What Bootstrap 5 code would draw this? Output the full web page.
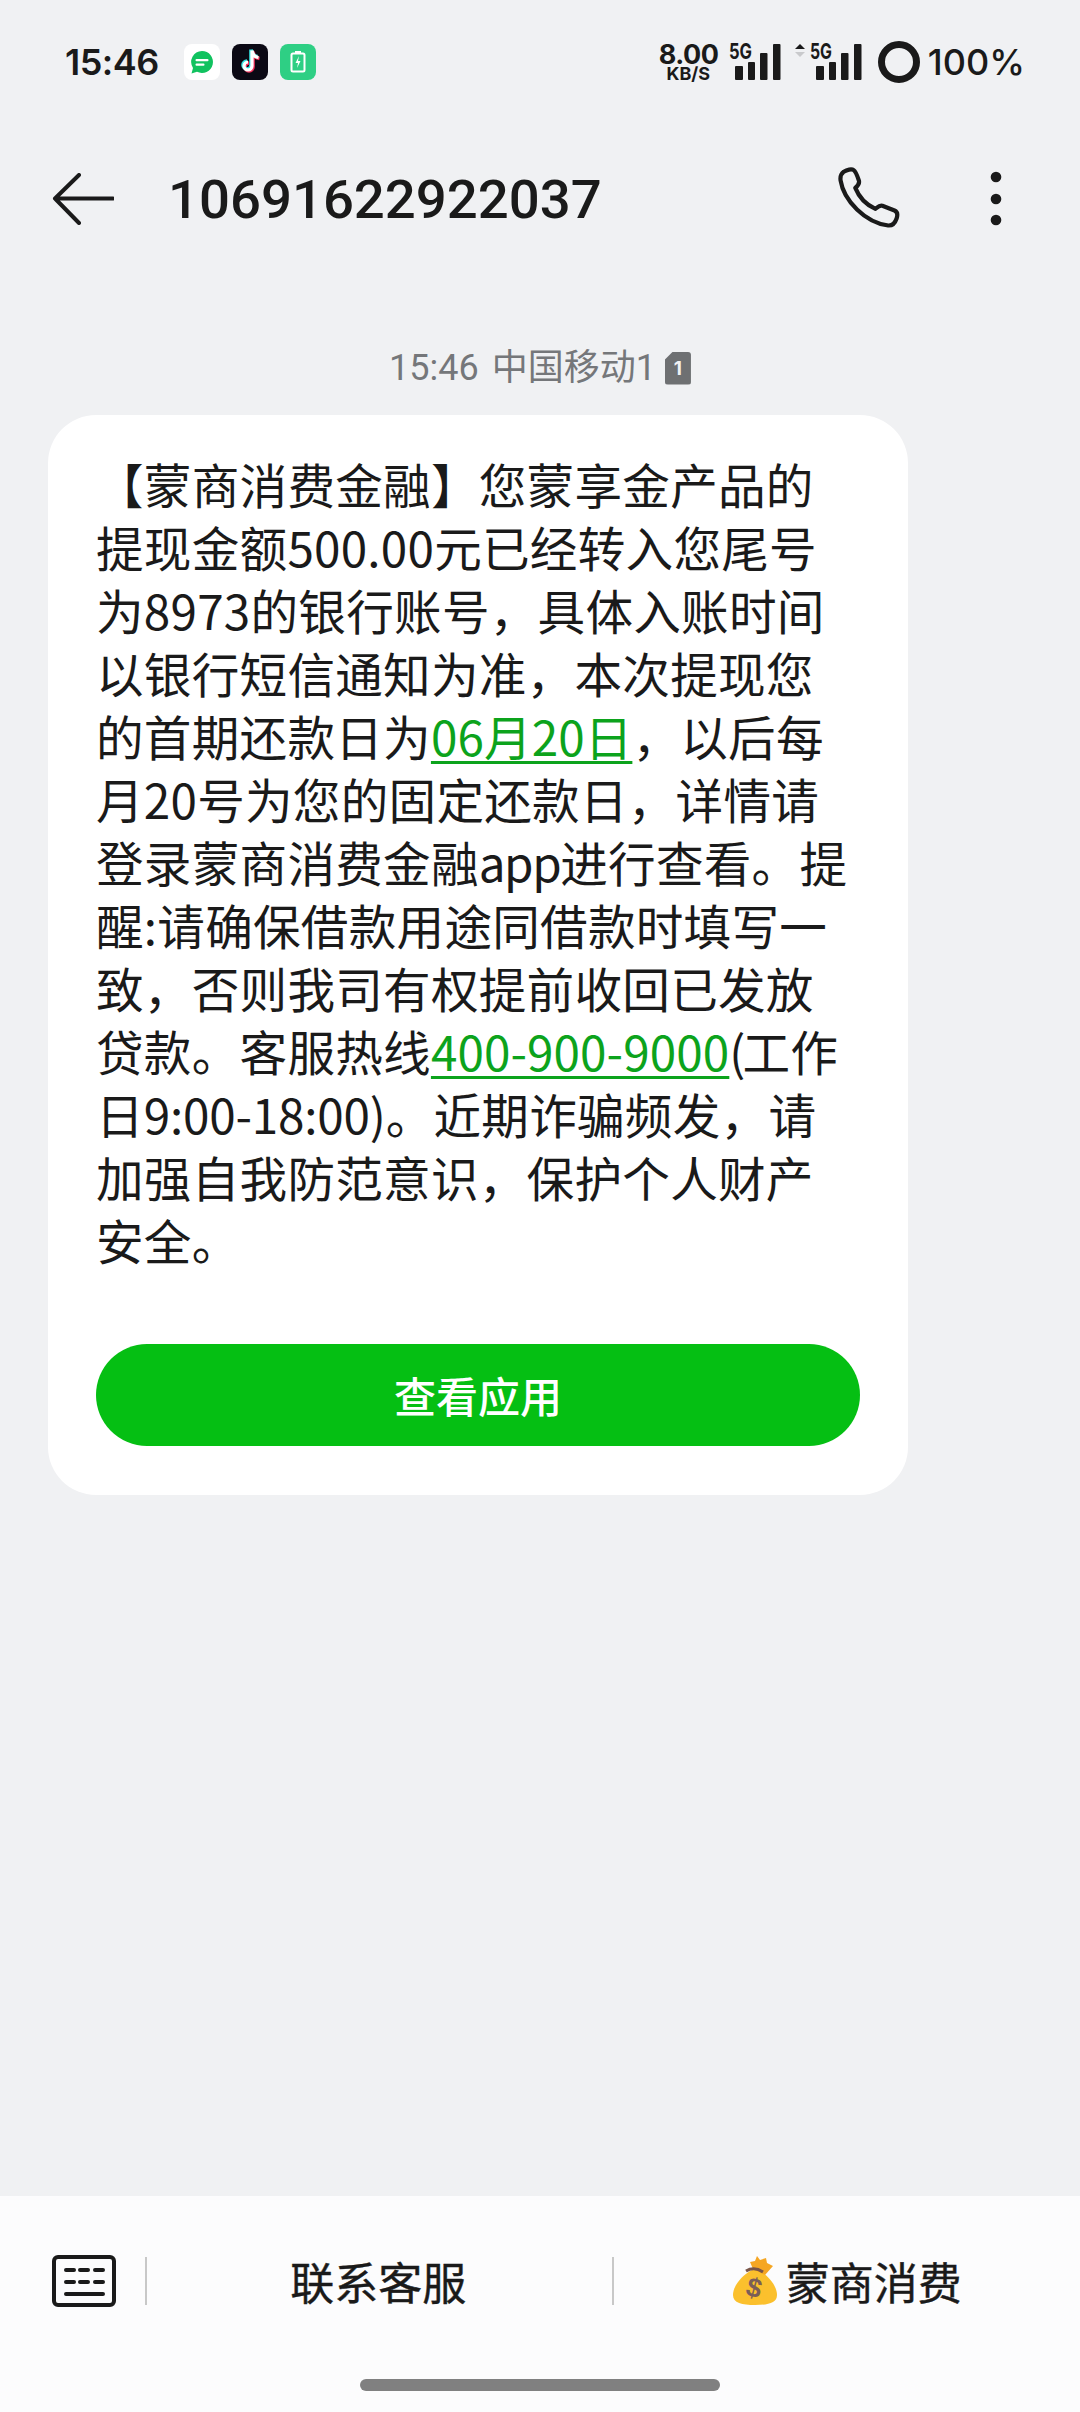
<!DOCTYPE html>
<html lang="zh-CN">
<head>
<meta charset="utf-8">
<title>短信</title>
<link href="https://cdn.jsdelivr.net/npm/bootstrap@5.3.0/dist/css/bootstrap.min.css" rel="stylesheet">
<style>
html,body{height:100%;}
body{background:#f0f1f3;color:#1a1a1a;font-family:Roboto,"Noto Sans CJK SC",sans-serif;width:1080px;height:2412px;overflow:hidden;}
.app-shell{height:2412px;}
.status-row{height:124px;padding:0 55px 0 65px;}
.status-time{font-family:Inter,Roboto,sans-serif;font-size:36px;font-weight:600;letter-spacing:-.5px;line-height:1;width:119px;}
.status-apps{gap:12px;}
.net-speed{font-family:Inter,sans-serif;font-weight:700;line-height:1;text-align:center;width:59px;margin-right:11px;}
.net-top{font-size:27px;letter-spacing:-.5px;height:23px;line-height:21px;}
.net-bot{font-size:18px;height:14px;line-height:14px;}
.sig-a{margin-right:13px;}
.sig-b{margin-right:16px;}
.batt-pct{font-family:Inter,sans-serif;font-size:36px;font-weight:500;line-height:1;margin-left:8px;}
.title-row{height:150px;padding:0 0 0 50px;}
.title-num{font-size:54.5px;font-weight:500;line-height:1;margin-left:54px;}
.title-actions{margin-left:auto;margin-right:78px;gap:87px;}
.stamp{margin-top:77px;height:34px;font-size:36px;line-height:34px;color:#75777a;gap:13px;}
.sim-tag{width:26px;height:33px;margin-left:-4px;background:#6e7072;color:#f0f1f3;font:700 19px/33px Inter,sans-serif;text-align:center;border-radius:3px;clip-path:polygon(8px 0,100% 0,100% 100%,0 100%,0 8px);}
.bubble{margin:30px 0 0 48px;width:860px;height:1080px;border-radius:48px;background:#fff;padding:37px 48px 0 48px;}
.msg-body{font-family:"Noto Sans CJK SC",sans-serif;font-size:47.6px;letter-spacing:.25px;line-height:63px;color:#1a1a1a;margin:0;white-space:nowrap;}
.msg-body a{color:#0ca31c;text-decoration:underline;text-underline-offset:5px;text-decoration-thickness:3px;letter-spacing:.1px;}
.run-app{letter-spacing:-1.45px;}
.run-paren{letter-spacing:-3px;}
.run-hours{letter-spacing:-.2px;}
.open-btn{display:block;width:100%;height:102px;margin-top:73px;border-radius:51px;border:0;background:#05bf13;color:#fff;font-family:"Noto Sans CJK SC",sans-serif;font-size:42px;font-weight:500;line-height:102px;padding:0;}
.spacer-area{flex:1 1 auto;}
.bottom-bar{height:216px;background:#fcfcfd;}
.menu-row{height:170px;}
.kbd-cell{width:145px;padding-left:52px;}
.menu-div{width:2px;height:48px;background:#c8c8c8;}
.menu-item{font-family:"Noto Sans CJK SC",sans-serif;font-size:44px;font-weight:400;-webkit-text-stroke:.4px #1a1a1a;line-height:1;color:#1a1a1a;width:466px;}
.menu-left{padding-right:3px;}
.bag-icon{margin-right:9px;}
.home-wrap{padding-top:13px;}
.home-bar{width:360px;height:12px;background:#808080;border-radius:6px;margin:0 auto;}
</style>
</head>
<body>
<div class="app-shell d-flex flex-column">
  <div class="status-row d-flex align-items-center">
    <div class="status-time">15:46</div>
    <div class="status-apps d-flex align-items-center">
      <svg width="36" height="36" viewBox="0 0 36 36"><rect width="36" height="36" rx="8" fill="#fff"/><path d="M18 7a11 11 0 1 1-5 20.800L7.500 29.500l1.500-5.500A11 11 0 0 1 18 7z" fill="#10c25f"/><rect x="11.500" y="15" width="13" height="2.200" rx="1" fill="#fff"/><rect x="11.500" y="19.500" width="9" height="2.200" rx="1" fill="#fff"/></svg>
      <svg width="36" height="36" viewBox="0 0 36 36"><rect width="36" height="36" rx="8" fill="#0b0914"/><path d="M19.500 6.500v15.500a4 4 0 1 1-4-4M19.500 6.500c.5 4 3 6.500 6.500 7" fill="none" stroke="#f4305a" stroke-width="3.600" transform="translate(1.500 1)"/><path d="M19.500 6.500v15.500a4 4 0 1 1-4-4M19.500 6.500c.5 4 3 6.500 6.500 7" fill="none" stroke="#35e4e4" stroke-width="3.600" transform="translate(-.5 -1)"/><path d="M19.500 6.500v15.500a4 4 0 1 1-4-4M19.500 6.500c.5 4 3 6.500 6.500 7" fill="none" stroke="#fff" stroke-width="3.200" transform="translate(.5 0)"/></svg>
      <svg width="36" height="36" viewBox="0 0 36 36"><rect width="36" height="36" rx="8" fill="#2ecf84"/><rect x="11.500" y="9.500" width="13" height="18" rx="1.500" fill="none" stroke="#fff" stroke-width="2"/><rect x="15" y="7" width="6" height="2.500" fill="#fff"/><path d="M19 12l-3.500 7H18l-1 5 3.500-7H18z" fill="#fff"/></svg>
    </div>
    <div class="d-flex align-items-center ms-auto">
      <div class="net-speed"><div class="net-top">8.00</div><div class="net-bot">KB/S</div></div>
      <svg class="sig-a" width="53" height="50" viewBox="0 -6 53 50"><text x="0" y="16" font-family="Inter,sans-serif" font-size="22" font-weight="700" fill="#1a1a1a" textLength="23" lengthAdjust="spacingAndGlyphs">5G</text><rect x="6" y="23" width="8" height="14" rx="1" fill="#1a1a1a"/><rect x="19" y="19" width="7" height="18" rx="1" fill="#1a1a1a"/><rect x="31" y="10" width="7.500" height="27" rx="1" fill="#1a1a1a"/><rect x="44" y="1" width="7.500" height="36" rx="1" fill="#1a1a1a"/></svg>
      <svg class="sig-b" width="67" height="50" viewBox="0 -6 67 50"><path d="M0 6l5-5 5 5z" fill="#1a1a1a"/><path d="M0 9l5 5 5-5z" fill="#c9cacc"/><text x="15" y="16" font-family="Inter,sans-serif" font-size="22" font-weight="700" fill="#1a1a1a" textLength="22" lengthAdjust="spacingAndGlyphs">5G</text><rect x="21" y="23" width="8" height="14" rx="1" fill="#1a1a1a"/><rect x="34" y="19" width="7" height="18" rx="1" fill="#1a1a1a"/><rect x="46" y="10" width="7.500" height="27" rx="1" fill="#1a1a1a"/><rect x="59" y="1" width="7.500" height="36" rx="1" fill="#1a1a1a"/></svg>
      <svg width="42" height="42" viewBox="0 0 42 42"><circle cx="21" cy="21" r="17.500" fill="none" stroke="#1a1a1a" stroke-width="7"/></svg>
      <div class="batt-pct">100%</div>
    </div>
  </div>
  <div class="title-row d-flex align-items-center">
    <svg width="64" height="52" viewBox="0 0 64 52"><path d="M29 2L5 25.500 29 50M5 25.500h58" fill="none" stroke="#1a1a1a" stroke-width="4" stroke-linecap="round" stroke-linejoin="round"/></svg>
    <div class="title-num">10691622922037</div>
    <div class="title-actions d-flex align-items-center">
      <svg width="65" height="65" viewBox="0 0 62 62"><path d="M5.500 4.500c3-1.900 7.500-2.900 9.500-1.500 2.200 1.500 3.700 6.500 4.900 9.900 1 3-.8 4.800-3.400 7 3.500 8.700 10.500 16.200 19.200 20 2-1.500 3.800-3.800 6.600-2.900l11.600 4.500c2.800 1.200 3 4.600 2 7.600-1.300 3.800-3.800 7-8 6.700C26 53 5.500 32 2.500 13c-.5-3 .5-6.500 3-8.500z" fill="none" stroke="#1a1a1a" stroke-width="4" stroke-linejoin="round"/></svg>
      <svg width="12" height="56" viewBox="0 0 12 56"><circle cx="6" cy="6" r="5.300" fill="#1a1a1a"/><circle cx="6" cy="28" r="5.300" fill="#1a1a1a"/><circle cx="6" cy="49" r="5.300" fill="#1a1a1a"/></svg>
    </div>
  </div>
  <div class="stamp d-flex align-items-center justify-content-center">
    <span>15:46</span><span>中国移动1</span><span class="sim-tag">1</span>
  </div>
  <div class="bubble">
    <p class="msg-body">【蒙商消费金融】您蒙享金产品的<br>提现金额500.00元已经转入您尾号<br>为8973的银行账号，具体入账时间<br>以银行短信通知为准，本次提现您<br>的首期还款日为<a href="#">06月20日</a>，以后每<br>月20号为您的固定还款日，详情请<br>登录蒙商消费金融<span class="run-app">app</span>进行查看。提<br>醒:请确保借款用途同借款时填写一<br>致，否则我司有权提前收回已发放<br>贷款。客服热线<a href="#">400-900-9000</a><span class="run-paren">(</span>工作<br>日<span class="run-hours">9:00-18:00)</span>。近期诈骗频发，请<br>加强自我防范意识，保护个人财产<br>安全。</p>
    <button class="open-btn btn" type="button">查看应用</button>
  </div>
  <div class="spacer-area"></div>
  <div class="bottom-bar">
    <div class="menu-row d-flex align-items-center">
      <div class="kbd-cell d-flex justify-content-start">
        <svg width="64" height="52" viewBox="0 0 64 52"><rect x="2" y="2" width="60" height="48" rx="4" fill="none" stroke="#1a1a1a" stroke-width="4"/><path d="M14 15h8M28 15h8M43 15h8M14 27h8M28 27h8M43 27h8M14 39h37" stroke="#1a1a1a" stroke-width="4" stroke-linecap="round"/></svg>
      </div>
      <div class="menu-div"></div>
      <div class="menu-left menu-item text-center">联系客服</div>
      <div class="menu-div"></div>
      <div class="menu-item d-flex align-items-center justify-content-center">
        <svg class="bag-icon" width="44" height="50" viewBox="0 0 44 50"><path d="M19 14C9 19 0 30 0 39c0 8 9 10 22 10s22-2 22-10c0-9-9-20-19-25z" fill="#fbc02d"/><path d="M20 13l-3-7 5-1 2-5 3 4 6-2 1 5 6 3-8 9z" fill="#f5a623"/><path d="M13 15c5-3 11-3 17 1" fill="none" stroke="#795548" stroke-width="3"/><text x="21" y="41" text-anchor="middle" font-family="Liberation Sans,sans-serif" font-size="27" font-weight="700" fill="#7b5e57" transform="rotate(15 21 32)">$</text></svg>
        <span>蒙商消费</span>
      </div>
    </div>
    <div class="home-wrap"><div class="home-bar"></div></div>
  </div>
</div>
<script src="https://cdn.jsdelivr.net/npm/bootstrap@5.3.0/dist/js/bootstrap.bundle.min.js"></script>
</body>
</html>
